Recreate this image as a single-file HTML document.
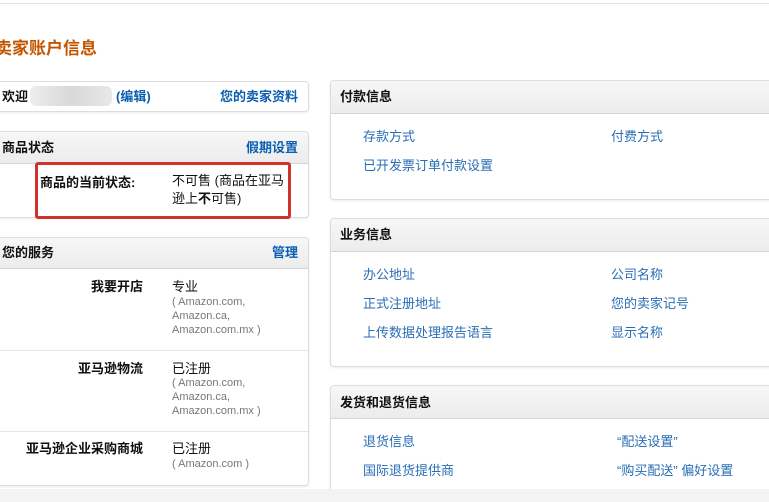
<!DOCTYPE html>
<html style="width:769px;height:502px;overflow:hidden"><head><meta charset="utf-8"><style>
*{margin:0;padding:0;box-sizing:border-box}
body{width:769px;height:502px;overflow:hidden;background:#fff;position:relative;font-family:"Liberation Sans","Noto Sans CJK SC",sans-serif;font-size:13px;color:#111}
.a{position:absolute;white-space:nowrap}
.box{position:absolute;border:1px solid #ddd;border-radius:4px;background:#fff;box-shadow:0 1px 2px rgba(0,0,0,.08)}
.hd{position:absolute;left:0;right:0;top:0;background:linear-gradient(#f7f7f7,#ececec);border-bottom:1px solid #d5d5d5;border-radius:4px 4px 0 0}
.b{font-weight:bold}
.lk{color:#2a6db5}
.hl{color:#0a5fb0;font-weight:bold}
.sm{color:#777;font-size:11px;line-height:14px}
.t{margin-top:-2px}
</style></head><body>
<div class="a" style="left:0;top:3px;width:769px;height:1px;background:#e2e2e2"></div>
<div class="a" style="left:-5px;top:34px;font-size:17px;color:#c45500;font-weight:bold">卖家账户信息</div>

<div class="box" style="left:-8px;top:81px;width:317px;height:31px"></div>
<div class="a b t" style="left:2px;top:88px">欢迎</div>
<div class="a" style="left:30px;top:86px;width:82px;height:20px;background:linear-gradient(90deg,#eee,#d8d8d8 50%,#e8e8e8);border-radius:6px"></div>
<div class="a hl t" style="left:116px;top:88px">(编辑)</div>
<div class="a hl t" style="left:220px;top:88px">您的卖家资料</div>

<div class="box" style="left:-8px;top:131px;width:317px;height:87px"><div class="hd" style="height:32px"></div></div>
<div class="a b t" style="left:2px;top:139px">商品状态</div>
<div class="a hl t" style="left:246px;top:139px">假期设置</div>
<div class="a" style="left:35px;top:162px;width:256px;height:57px;border:3px solid #d0332e;border-radius:3px"></div>
<div class="a b t" style="left:40px;top:174px">商品的当前状态:</div>
<div class="a t" style="left:172px;top:174px;line-height:18px">不可售 (商品在亚马<br>逊上<b>不</b>可售)</div>

<div class="box" style="left:-8px;top:237px;width:317px;height:249px"><div class="hd" style="height:31px"></div>
<div class="a" style="left:0;right:0;top:112px;height:1px;background:#e5e5e5"></div>
<div class="a" style="left:0;right:0;top:193px;height:1px;background:#e5e5e5"></div></div>
<div class="a b t" style="left:2px;top:244px">您的服务</div>
<div class="a hl t" style="left:272px;top:244px">管理</div>
<div class="a b t" style="right:626px;top:278px">我要开店</div>
<div class="a t" style="left:172px;top:278px">专业</div>
<div class="a sm" style="left:172px;top:295px">( Amazon.com,<br>Amazon.ca,<br>Amazon.com.mx )</div>
<div class="a b t" style="right:626px;top:360px">亚马逊物流</div>
<div class="a t" style="left:172px;top:360px">已注册</div>
<div class="a sm" style="left:172px;top:376px">( Amazon.com,<br>Amazon.ca,<br>Amazon.com.mx )</div>
<div class="a b t" style="right:626px;top:440px">亚马逊企业采购商城</div>
<div class="a t" style="left:172px;top:440px">已注册</div>
<div class="a sm" style="left:172px;top:457px">( Amazon.com )</div>

<div class="box" style="left:330px;top:80px;width:450px;height:120px"><div class="hd" style="height:33px"></div></div>
<div class="a b t" style="left:340px;top:88px">付款信息</div>
<div class="a lk t" style="left:363px;top:128px">存款方式</div>
<div class="a lk t" style="left:611px;top:128px">付费方式</div>
<div class="a lk t" style="left:363px;top:157px">已开发票订单付款设置</div>

<div class="box" style="left:330px;top:218px;width:450px;height:149px"><div class="hd" style="height:33px"></div></div>
<div class="a b t" style="left:340px;top:226px">业务信息</div>
<div class="a lk t" style="left:363px;top:266px">办公地址</div>
<div class="a lk t" style="left:611px;top:266px">公司名称</div>
<div class="a lk t" style="left:363px;top:295px">正式注册地址</div>
<div class="a lk t" style="left:611px;top:295px">您的卖家记号</div>
<div class="a lk t" style="left:363px;top:324px">上传数据处理报告语言</div>
<div class="a lk t" style="left:611px;top:324px">显示名称</div>

<div class="box" style="left:330px;top:385px;width:450px;height:104px;border-bottom:none;border-radius:4px 4px 0 0"><div class="hd" style="height:33px"></div></div>
<div class="a b t" style="left:340px;top:394px">发货和退货信息</div>
<div class="a lk t" style="left:363px;top:433px">退货信息</div>
<div class="a lk t" style="left:617px;top:433px">“配送设置”</div>
<div class="a lk t" style="left:363px;top:462px">国际退货提供商</div>
<div class="a lk t" style="left:617px;top:462px">“购买配送” 偏好设置</div>

<div class="a" style="left:0;top:489px;width:769px;height:13px;background:#f3f3f3"></div>
</body></html>
